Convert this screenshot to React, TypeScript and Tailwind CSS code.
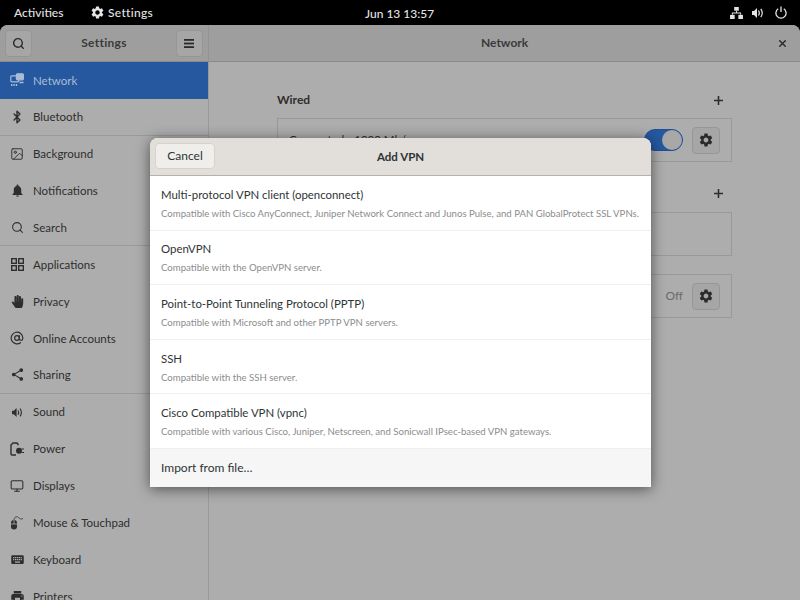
import type { ReactNode } from "react"
import { AtSign, Bluetooth, Image, Monitor, Search, X } from "lucide-react"
import { FaHandPaper } from "react-icons/fa"
import { MdKeyboard, MdNotifications, MdPrint, MdSettings, MdShare } from "react-icons/md"

const font = "font-['Lato',sans-serif]"

function NetworkIcon() {
  return (
    <svg width="14" height="14" viewBox="0 0 14 14" fill="none" stroke="#a9bcd6" strokeWidth="1.2">
      <rect x="0.8" y="2.800" width="8" height="6" rx="1" />
      <rect x="6.400" y="0.800" width="7" height="6" rx="1" fill="#a9bcd6" />
      <path d="M1 12h7" strokeWidth="2" strokeDasharray="1.4 1" />
      <path d="M9.500 9.500h4" strokeWidth="1.6" />
    </svg>
  )
}

function AppsIcon() {
  return (
    <svg width="13" height="13" viewBox="0 0 13 13" fill="none" stroke="#2e2e2e" strokeWidth="1.4">
      <rect x="0.700" y="0.700" width="4.600" height="4.600" />
      <rect x="7.700" y="0.700" width="4.600" height="4.600" />
      <rect x="0.700" y="7.700" width="4.600" height="4.600" />
      <rect x="7.700" y="7.700" width="4.600" height="4.600" />
    </svg>
  )
}

function SpeakerIcon({ color = "#2e2e2e", size = 11 }: { color?: string; size?: number }) {
  return (
    <svg width={size} height={size} viewBox="0 0 12 12" fill={color} stroke="none">
      <path d="M0 4h2l3-3v10L2 8H0z" />
      <path d="M6.500 3.500c1 1.500 1 3.500 0 5" fill="none" stroke={color} strokeWidth="1.2" />
      <path d="M8.800 1.800c1.800 2.600 1.800 5.800 0 8.400" fill="none" stroke={color} strokeWidth="1.2" />
    </svg>
  )
}

function PowerIcon() {
  return (
    <svg width="14" height="14" viewBox="0 0 14 14" fill="none" stroke="#2e2e2e" strokeWidth="1.4">
      <path d="M6 13H2a1 1 0 0 1-1-1V3l2-2h4l1.500 2" />
      <circle cx="9" cy="8.800" r="3" fill="#2e2e2e" stroke="none" />
      <path d="M11.500 7h2.500M11.500 10.500h2.500" strokeWidth="1.2" />
    </svg>
  )
}

function MouseIcon() {
  return (
    <svg width="15" height="14" viewBox="0 0 15 14" fill="none" stroke="#2e2e2e">
      <rect x="1" y="4" width="6" height="9.500" rx="3" fill="#2e2e2e" stroke="none" />
      <path d="M1 8h6M4 4v4" stroke="#adadad" strokeWidth="0.8" />
      <path d="M4 4C4 1 7 0 8.500 1.500S11 3.500 13 2.500" strokeWidth="0.8" />
    </svg>
  )
}

type Row = { label: string; icon: ReactNode; border?: boolean; active?: boolean }

const ic = "#2e2e2e"

const rows: Row[] = [
  { label: "Network", icon: <NetworkIcon />, active: true },
  { label: "Bluetooth", icon: <Bluetooth size={14} color={ic} strokeWidth={2.4} />, border: true },
  { label: "Background", icon: <Image size={14} color={ic} strokeWidth={1.6} /> },
  { label: "Notifications", icon: <MdNotifications size={15} color={ic} /> },
  { label: "Search", icon: <Search size={13} color={ic} strokeWidth={2} />, border: true },
  { label: "Applications", icon: <AppsIcon /> },
  { label: "Privacy", icon: <FaHandPaper size={13} color={ic} /> },
  { label: "Online Accounts", icon: <AtSign size={14} color={ic} strokeWidth={2} /> },
  { label: "Sharing", icon: <MdShare size={15} color={ic} />, border: true },
  { label: "Sound", icon: <SpeakerIcon /> },
  { label: "Power", icon: <PowerIcon /> },
  { label: "Displays", icon: <Monitor size={14} color={ic} strokeWidth={1.8} /> },
  { label: "Mouse & Touchpad", icon: <MouseIcon /> },
  { label: "Keyboard", icon: <MdKeyboard size={15} color={ic} /> },
  { label: "Printers", icon: <MdPrint size={15} color={ic} /> },
]

const vpns = [
  {
    title: "Multi-protocol VPN client (openconnect)",
    desc: "Compatible with Cisco AnyConnect, Juniper Network Connect and Junos Pulse, and PAN GlobalProtect SSL VPNs.",
  },
  { title: "OpenVPN", desc: "Compatible with the OpenVPN server." },
  { title: "Point-to-Point Tunneling Protocol (PPTP)", desc: "Compatible with Microsoft and other PPTP VPN servers." },
  { title: "SSH", desc: "Compatible with the SSH server." },
  {
    title: "Cisco Compatible VPN (vpnc)",
    desc: "Compatible with various Cisco, Juniper, Netscreen, and Sonicwall IPsec-based VPN gateways.",
  },
]

function GearButton() {
  return (
    <div className="flex h-[27px] w-[28px] items-center justify-center rounded-[4px] border border-[#969696] bg-[#a6a6a6]">
      <MdSettings size={16} color="#2a2a2a" />
    </div>
  )
}

function PlusIcon() {
  return (
    <svg width="9" height="9" viewBox="0 0 9 9" stroke="#2e2e2e" strokeWidth="1.6">
      <path d="M4.500 0v9M0 4.500h9" />
    </svg>
  )
}

export default function App() {
  return (
    <div className={`relative h-[600px] w-[800px] overflow-hidden bg-black ${font}`}>
      {/* top bar */}
      <div className="flex h-[25px] items-center bg-black text-[12px] font-medium text-[#e4e4e4]">
        <span className="ml-[14px] w-[63px]">Activities</span>
        <MdSettings size={15} color="#e4e4e4" className="ml-[13px]" />
        <span className="ml-[3px] tracking-[0.3px]">Settings</span>
        <span className="absolute left-[365px] top-[5px]">Jun 13 13:57</span>
        <div className="ml-auto mr-[13px] flex items-center">
          <svg width="13" height="12" viewBox="0 0 14 13" fill="#e4e4e4">
            <rect x="4.500" y="0" width="5" height="4" />
            <rect x="0" y="8.500" width="5" height="4.500" />
            <rect x="9" y="8.500" width="5" height="4.500" />
            <path d="M6.500 4h1v2h4.500v2.500h-1V7H3v1.500H2V6h4.500z" />
          </svg>
          <div className="ml-[9px] flex">
            <SpeakerIcon color="#e4e4e4" size={12} />
          </div>
          <svg className="ml-[11px]" width="12" height="13" viewBox="0 0 13 14" fill="none" stroke="#e4e4e4" strokeWidth="1.4">
            <path d="M3.500 3a5.500 5.500 0 1 0 6 0" />
            <path d="M6.500 0.500v6" />
          </svg>
        </div>
      </div>

      {/* window */}
      <div className="h-[575px] overflow-hidden rounded-t-[8px] bg-[#adadad] text-[11.500px] text-[#2e2e2e]">
        <div className="flex h-[37px] border-b border-[#8a8a8a] bg-[#9e9e9e]">
          <div className="flex w-[209px] items-center justify-between border-r border-[#939393] px-[5px]">
            <div className="flex h-[27px] w-[27px] items-center justify-center rounded-[4px] border border-[#969696] bg-[#a6a6a6]">
              <Search size={13} color="#2a2a2a" strokeWidth={2.6} />
            </div>
            <span className="text-[12px] font-bold tracking-[0.3px] text-[#3a3a3a]">Settings</span>
            <div className="flex h-[27px] w-[27px] items-center justify-center rounded-[4px] border border-[#969696] bg-[#a6a6a6]">
              <svg width="10" height="9" viewBox="0 0 10 9" fill="#2a2a2a">
                <rect width="10" height="1.800" />
                <rect y="3.600" width="10" height="1.800" />
                <rect y="7.200" width="10" height="1.800" />
              </svg>
            </div>
          </div>
          <div className="flex flex-1 items-center pl-[272px]">
            <span className="text-[12px] font-bold text-[#3a3a3a]">Network</span>
            <X size={11} color="#2a2a2a" strokeWidth={3} className="ml-auto mr-[12px]" />
          </div>
        </div>

        <div className="flex">
          {/* sidebar */}
          <div className="w-[209px] border-r border-[#9a9a9a]">
            {rows.map((r) => (
              <div
                key={r.label}
                className={`flex h-[36.850px] items-center ${r.border ? "border-b border-[#9a9a9a]" : ""} ${
                  r.active ? "bg-[#25589f] text-[#a9bcd6]" : ""
                }`}
              >
                <div className="flex w-[33px] justify-center pl-[1px]">{r.icon}</div>
                <span>{r.label}</span>
              </div>
            ))}
          </div>

          {/* content */}
          <div className="flex-1 pl-[68px] pr-[68px] pt-[29px]">
            <div className="flex items-center justify-between pr-[9px] text-[12px]">
              <span className="font-bold">Wired</span>
              <PlusIcon />
            </div>
            <div className="mt-[9px] flex h-[44px] items-center justify-between border border-[#999999] pl-[11px] pr-[11px]">
              <span>Connected - 1000 Mb/s</span>
              <div className="flex items-center gap-[9px]">
                <div className="flex h-[22px] w-[39px] items-center justify-end rounded-full border border-[#1f4f92] bg-[#25589f]">
                  <div className="h-[20px] w-[20px] rounded-full bg-[#a8a8a8]" />
                </div>
                <GearButton />
              </div>
            </div>
            <div className="mt-[22px] flex items-center justify-between pr-[9px] text-[12px]">
              <span className="font-bold">VPN</span>
              <PlusIcon />
            </div>
            <div className="mt-[10px] h-[44px] border border-[#999999]" />
            <div className="mt-[18px] flex h-[44px] items-center justify-end border border-[#999999] pr-[11px]">
              <span className="mr-[9px] text-[12px] text-[#6b6b6b]">Off</span>
              <GearButton />
            </div>
          </div>
        </div>
      </div>

      {/* dialog */}
      <div className="absolute left-[150px] top-[138px] w-[501px] overflow-hidden rounded-t-[8px] bg-white text-[#2e3436] shadow-[0_2px_14px_rgba(0,0,0,0.55)]">
        <div className="relative flex h-[38px] items-center justify-center border-b border-[#b5b1ab] bg-[#e2dfda]">
          <div className="absolute left-[5px] top-[5px] flex h-[26px] w-[60px] items-center justify-center rounded-[4px] border border-[#d5d2cc] bg-[#f0eeeb] text-[12px]">
            Cancel
          </div>
          <span className="text-[11.500px] font-bold">Add VPN</span>
        </div>
        {vpns.map((v) => (
          <div key={v.title} className="flex h-[54.600px] flex-col justify-center border-b border-[#efefef] pl-[11px]">
            <div className="text-[11.400px] leading-[18px]">{v.title}</div>
            <div className="mt-[3px] whitespace-nowrap text-[9.600px] leading-[13px] text-[#8c8c8c]">{v.desc}</div>
          </div>
        ))}
        <div className="flex h-[38px] items-center bg-[#f6f6f6] pl-[11px] text-[12px]">Import from file…</div>
      </div>
    </div>
  )
}
